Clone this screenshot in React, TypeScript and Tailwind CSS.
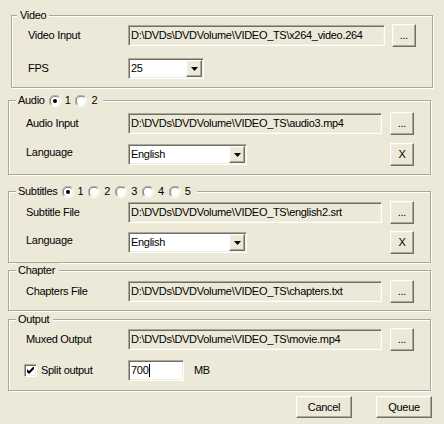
import React from "react";

const sunken =
  "border border-t-[#aca899] border-l-[#aca899] border-r-white border-b-white shadow-[inset_1px_1px_0_#716f64,inset_-1px_-1px_0_#f1efe2]";
const raised =
  "border border-t-white border-l-white border-r-[#716f64] border-b-[#716f64] shadow-[inset_-1px_-1px_0_#aca899,inset_1px_1px_0_#f1efe2]";

function Group({
  className,
  legendClass,
  legend,
  children,
}: {
  className: string;
  legendClass: string;
  legend: React.ReactNode;
  children: React.ReactNode;
}) {
  return (
    <div
      className={
        "relative border border-[#aca899] shadow-[inset_1px_1px_0_#ffffff,1px_1px_0_#ffffff] " +
        className
      }
    >
      <div
        className={
          "absolute top-[-8px] h-[15px] flex items-center bg-[#ece9d8] " +
          legendClass
        }
      >
        {legend}
      </div>
      {children}
    </div>
  );
}

function Btn({ className, children }: { className: string; children: React.ReactNode }) {
  return (
    <div className={`${raised} bg-[#ece9d8] flex items-center justify-center ${className}`}>
      {children}
    </div>
  );
}

function TextBox({ className, children }: { className: string; children: React.ReactNode }) {
  return (
    <div className={`${sunken} h-[21px] flex items-center pl-[2px] whitespace-nowrap overflow-hidden ${className}`}>
      {children}
    </div>
  );
}

function Combo({ className, value }: { className: string; value: string }) {
  return (
    <div className={`${sunken} h-[21px] bg-white flex items-center justify-between ${className}`}>
      <span className="pl-[2px]">{value}</span>
      <div className={`${raised} bg-[#ece9d8] w-[16px] h-[17px] mr-[1px] flex items-center justify-center`}>
        <svg width="7" height="4" viewBox="0 0 7 4">
          <path d="M0 0H7L3.5 4Z" fill="#000" />
        </svg>
      </div>
    </div>
  );
}

function Radio({ checked }: { checked?: boolean }) {
  return (
    <svg width="12" height="12" viewBox="0 0 12 12">
      <circle cx="6" cy="6" r="5.5" fill="#ffffff" stroke="#ffffff" />
      <path d="M1.8 10.2 A5.5 5.5 0 0 1 10.2 1.8" fill="none" stroke="#aca899" strokeWidth="1" />
      <path d="M2.6 9.4 A4.4 4.4 0 0 1 9.4 2.6" fill="none" stroke="#716f64" strokeWidth="1" />
      <path d="M9.4 2.6 A4.4 4.4 0 0 1 2.6 9.4" fill="none" stroke="#f1efe2" strokeWidth="1" />
      {checked && <circle cx="6" cy="6" r="2" fill="#000" />}
    </svg>
  );
}

function RadioItem({ n, checked, first }: { n: string; checked?: boolean; first?: boolean }) {
  return (
    <div className={`flex items-center ${first ? "ml-[4px]" : "ml-[5px]"}`}>
      <Radio checked={checked} />
      <span className="ml-[4px]">{n}</span>
    </div>
  );
}

export default function App() {
  return (
    <div className="w-[444px] h-[424px] bg-[#ece9d8] text-black text-[11px] tracking-[-0.3px] font-['Liberation_Sans',Arial,sans-serif] flex flex-col overflow-hidden">
      {/* Video */}
      <Group
        className="ml-[11px] mt-[15px] w-[422px] h-[73px] pt-[8px]"
        legendClass="left-[5px] px-[3px]"
        legend={<span>Video</span>}
      >
        <div className="flex items-center h-[23px] pl-[16px]">
          <div className="w-[100px]">Video Input</div>
          <TextBox className="w-[257px] bg-[#ece9d8]">D:\DVDs\DVDVolume\VIDEO_TS\x264_video.264</TextBox>
          <Btn className="ml-[7px] w-[24px] h-[23px]">...</Btn>
        </div>
        <div className="flex items-center h-[23px] pl-[16px] mt-[10px]">
          <div className="w-[100px]">FPS</div>
          <Combo className="w-[76px]" value="25" />
        </div>
      </Group>

      {/* Audio */}
      <Group
        className="ml-[8px] mt-[12px] w-[423px] h-[75px] pt-[11px]"
        legendClass="left-[7px] px-[2px]"
        legend={
          <>
            <span>Audio</span>
            <RadioItem n="1" checked first />
            <RadioItem n="2" />
            <span className="w-[4px]" />
          </>
        }
      >
        <div className="flex items-center h-[23px] pl-[17px]">
          <div className="w-[102px]">Audio Input</div>
          <TextBox className="w-[254px] bg-[#ece9d8]">D:\DVDs\DVDVolume\VIDEO_TS\audio3.mp4</TextBox>
          <Btn className="ml-[8px] w-[24px] h-[23px]">...</Btn>
        </div>
        <div className="flex items-center h-[23px] pl-[17px] mt-[8px]">
          <div className="w-[102px] -mt-[4px]">Language</div>
          <Combo className="w-[119px]" value="English" />
          <Btn className="ml-[143px] w-[24px] h-[23px]">X</Btn>
        </div>
      </Group>

      {/* Subtitles */}
      <Group
        className="ml-[8px] mt-[16px] w-[423px] h-[72px] pt-[9px]"
        legendClass="left-[7px] px-[2px]"
        legend={
          <>
            <span>Subtitles</span>
            <RadioItem n="1" checked first />
            <RadioItem n="2" />
            <RadioItem n="3" />
            <RadioItem n="4" />
            <RadioItem n="5" />
            <span className="w-[4px]" />
          </>
        }
      >
        <div className="flex items-center h-[23px] pl-[17px]">
          <div className="w-[102px]">Subtitle File</div>
          <TextBox className="w-[254px] bg-[#ece9d8]">D:\DVDs\DVDVolume\VIDEO_TS\english2.srt</TextBox>
          <Btn className="ml-[8px] w-[24px] h-[23px]">...</Btn>
        </div>
        <div className="flex items-center h-[23px] pl-[17px] mt-[7px]">
          <div className="w-[102px] -mt-[4px]">Language</div>
          <Combo className="w-[119px]" value="English" />
          <Btn className="ml-[143px] w-[24px] h-[23px]">X</Btn>
        </div>
      </Group>

      {/* Chapter */}
      <Group
        className="ml-[8px] mt-[7px] w-[423px] h-[41px] pt-[9px]"
        legendClass="left-[7px] px-[2px]"
        legend={<span className="pr-[2px]">Chapter</span>}
      >
        <div className="flex items-center h-[23px] pl-[17px]">
          <div className="w-[102px]">Chapters File</div>
          <TextBox className="w-[254px] bg-[#ece9d8]">D:\DVDs\DVDVolume\VIDEO_TS\chapters.txt</TextBox>
          <Btn className="ml-[8px] w-[24px] h-[23px]">...</Btn>
        </div>
      </Group>

      {/* Output */}
      <Group
        className="ml-[8px] mt-[8px] w-[423px] h-[72px] pt-[8px]"
        legendClass="left-[7px] px-[2px]"
        legend={<span className="pr-[2px]">Output</span>}
      >
        <div className="flex items-center h-[23px] pl-[17px]">
          <div className="w-[102px]">Muxed Output</div>
          <TextBox className="w-[254px] bg-[#ece9d8]">D:\DVDs\DVDVolume\VIDEO_TS\movie.mp4</TextBox>
          <Btn className="ml-[8px] w-[24px] h-[23px]">...</Btn>
        </div>
        <div className="flex items-center h-[23px] pl-[15px] mt-[8px]">
          <div className="w-[104px] flex items-center">
            <div className={`${sunken} w-[13px] h-[13px] bg-white flex items-center justify-center`}>
              <svg width="7" height="7" viewBox="0 0 7 7">
                <path d="M0 2L2 4L7 -1V2L2 7L0 5Z" fill="#000" />
              </svg>
            </div>
            <span className="ml-[4px]">Split output</span>
          </div>
          <TextBox className="w-[56px] bg-white">
            <span>700</span>
            <span className="inline-block w-[1px] h-[13px] bg-black ml-[1px]" />
          </TextBox>
          <span className="ml-[10px]">MB</span>
        </div>
      </Group>

      {/* Buttons */}
      <div className="flex justify-end gap-[24px] pr-[12px] mt-[5px]">
        <Btn className="w-[56px] h-[22px]">Cancel</Btn>
        <Btn className="w-[56px] h-[22px]">Queue</Btn>
      </div>
    </div>
  );
}
